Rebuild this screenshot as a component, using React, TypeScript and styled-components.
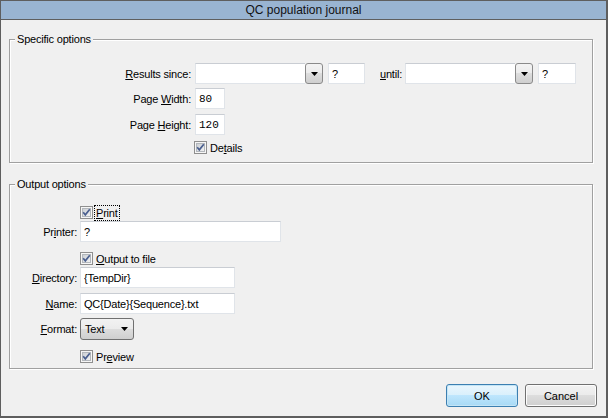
import React from 'react';
import styled, { createGlobalStyle } from 'styled-components';

const GlobalStyle = createGlobalStyle`
  html, body {
    margin: 0;
    padding: 0;
    background: #f0f0f0;
  }
  body {
    font-family: "Liberation Sans", Arial, sans-serif;
    font-size: 11px;
    color: #000;
  }
`;

const Window = styled.div`
  width: 608px;
  height: 418px;
  box-sizing: border-box;
  border-style: solid;
  border-color: #5e5e5e;
  border-width: 1px 2px 2px 1px;
  background: #f0f0f0;
  display: flex;
  flex-direction: column;
`;

const TitleBar = styled.div`
  height: 18px;
  flex: none;
  background: #99b4d1;
  border-bottom: 1px solid #5e5e5e;
  display: flex;
  align-items: center;
  justify-content: center;
  font-size: 12px;
  color: #111;
`;

const Body = styled.div`
  flex: 1;
  padding: 19px 9px 0 8px;
  display: flex;
  flex-direction: column;
`;

const Group = styled.section<{ $height: number; $mt?: number }>`
  position: relative;
  box-sizing: border-box;
  width: 584px;
  height: ${p => p.$height}px;
  margin-top: ${p => p.$mt ?? 0}px;
  border: 1px solid #a0a0a0;
  box-shadow: inset 1px 1px 0 #fff, 1px 1px 0 #fff;
  display: flex;
  flex-direction: column;
`;

const Legend = styled.span`
  position: absolute;
  top: -7px;
  left: 5px;
  padding: 0 2px;
  line-height: 13px;
  background: #f0f0f0;
  letter-spacing: -0.2px;
`;

const Row = styled.div<{ $mt: number; $h: number; $indent?: number }>`
  display: flex;
  align-items: center;
  height: ${p => p.$h}px;
  margin-top: ${p => p.$mt}px;
  padding-left: ${p => p.$indent ?? 0}px;
`;

const FieldLabel = styled.label<{ $w?: number; $gap?: number }>`
  flex: none;
  width: ${p => (p.$w ? `${p.$w}px` : 'auto')};
  margin-right: ${p => p.$gap ?? 4}px;
  text-align: right;
  white-space: nowrap;
  letter-spacing: -0.2px;
`;

const Key = styled.span`
  text-decoration: underline;
`;

const TextBox = styled.input<{ $w: number; $mono?: boolean }>`
  box-sizing: border-box;
  width: ${p => p.$w}px;
  height: 21px;
  margin: 0;
  padding: 0 0 0 3px;
  border: 1px solid #e0e4e9;
  border-top-color: #c9cdd3;
  background: #fff;
  outline: none;
  font-family: ${p => (p.$mono ? '"Liberation Mono", monospace' : '"Liberation Sans", Arial, sans-serif')};
  font-size: 11px;
  letter-spacing: ${p => (p.$mono ? '0' : '-0.2px')};
  color: #000;
`;

const Combo = styled.div<{ $ml?: number }>`
  display: flex;
  width: 128px;
  height: 21px;
  margin-left: ${p => p.$ml ?? 0}px;
  margin-right: 5px;
`;

const ComboField = styled.div`
  flex: 1;
  box-sizing: border-box;
  background: #fff;
  border: 1px solid #e0e4e9;
  border-top-color: #c9cdd3;
  border-right: none;
`;

const ComboButton = styled.div`
  width: 18px;
  box-sizing: border-box;
  border: 1px solid #8a8a8a;
  border-radius: 3px;
  background: linear-gradient(#f3f3f3, #ebebeb 50%, #dddddd 50%, #cfcfcf);
  display: flex;
  align-items: center;
  justify-content: center;
`;

const SelectBox = styled.div`
  box-sizing: border-box;
  width: 54px;
  height: 22px;
  border: 1px solid #707070;
  border-radius: 3px;
  background: linear-gradient(#f2f2f2, #ebebeb 50%, #dddddd 50%, #cfcfcf);
  display: flex;
  align-items: center;
  justify-content: space-between;
  padding: 0 5px 0 4px;
  letter-spacing: -0.2px;
`;

const CheckWrap = styled.div`
  display: flex;
  align-items: center;
  gap: 1px;
  letter-spacing: -0.2px;
`;

const CheckText = styled.span<{ $focus?: boolean }>`
  padding: 1px 1px;
  border: 1px dotted ${p => (p.$focus ? '#000' : 'transparent')};
`;

const Footer = styled.div`
  display: flex;
  justify-content: flex-end;
  gap: 7px;
  margin-top: 15px;
`;

const Button = styled.button<{ $default?: boolean }>`
  box-sizing: border-box;
  width: 72px;
  height: 23px;
  margin: 0;
  border-radius: 3px;
  border: 1px solid ${p => (p.$default ? '#3c7fb1' : '#707070')};
  background: ${p =>
    p.$default
      ? 'linear-gradient(#eaf6fd, #d9f0fc 50%, #bee6fd 50%, #a7d9f5)'
      : 'linear-gradient(#f2f2f2, #ebebeb 50%, #dddddd 50%, #cfcfcf)'};
  box-shadow: inset 0 0 0 1px ${p => (p.$default ? '#c4e5f6' : '#fcfcfc')};
  font-family: "Liberation Sans", Arial, sans-serif;
  font-size: 11px;
  color: #000;
`;

const Arrow = () => (
  <svg width="7" height="4" viewBox="0 0 7 4">
    <path d="M0 0h7L3.5 4z" fill="#000" />
  </svg>
);

const CheckBox = () => (
  <svg width="13" height="13" viewBox="0 0 13 13">
    <defs>
      <linearGradient id="cbFill" x1="0" y1="0" x2="1" y2="1">
        <stop offset="0" stopColor="#c9cdd2" />
        <stop offset="1" stopColor="#f4f4f4" />
      </linearGradient>
    </defs>
    <rect x="0.5" y="0.5" width="12" height="12" fill="#f6f6f6" stroke="#8f8f8f" />
    <rect x="2.5" y="2.5" width="8" height="8" fill="url(#cbFill)" stroke="#b3b7bc" />
    <path d="M3.2 6.3 L5.3 8.8 L9.8 3.2" fill="none" stroke="#4a5f8f" strokeWidth="1.7" />
  </svg>
);

const Check = ({ children, focus }: { children: React.ReactNode; focus?: boolean }) => (
  <CheckWrap>
    <CheckBox />
    <CheckText $focus={focus}>{children}</CheckText>
  </CheckWrap>
);

const App: React.FC = () => {
  return (
    <>
      <GlobalStyle />
      <Window>
        <TitleBar>QC population journal</TitleBar>
        <Body>
          <Group $height={124}>
            <Legend>Specific options</Legend>
            <Row $mt={23} $h={21}>
              <FieldLabel $w={181}>
                <Key>R</Key>esults since:
              </FieldLabel>
              <Combo>
                <ComboField />
                <ComboButton>
                  <Arrow />
                </ComboButton>
              </Combo>
              <TextBox $w={37} defaultValue="?" readOnly />
              <FieldLabel $gap={3} style={{ marginLeft: 15 }}>
                <Key>u</Key>ntil:
              </FieldLabel>
              <Combo>
                <ComboField />
                <ComboButton>
                  <Arrow />
                </ComboButton>
              </Combo>
              <TextBox $w={38} defaultValue="?" readOnly />
            </Row>
            <Row $mt={4} $h={21}>
              <FieldLabel $w={181}>
                Page <Key>W</Key>idth:
              </FieldLabel>
              <TextBox $w={30} $mono defaultValue="80" readOnly />
            </Row>
            <Row $mt={5} $h={21}>
              <FieldLabel $w={181}>
                Page <Key>H</Key>eight:
              </FieldLabel>
              <TextBox $w={30} $mono defaultValue="120" readOnly />
            </Row>
            <Row $mt={6} $h={13} $indent={184}>
              <Check>
                De<Key>t</Key>ails
              </Check>
            </Row>
          </Group>

          <Group $height={185} $mt={21}>
            <Legend>Output options</Legend>
            <Row $mt={21} $h={13} $indent={70}>
              <Check focus>
                <Key>P</Key>rint
              </Check>
            </Row>
            <Row $mt={2} $h={21}>
              <FieldLabel $w={67} $gap={3}>
                Pr<Key>i</Key>nter:
              </FieldLabel>
              <TextBox $w={201} defaultValue="?" readOnly />
            </Row>
            <Row $mt={10} $h={13} $indent={70}>
              <Check>
                <Key>O</Key>utput to file
              </Check>
            </Row>
            <Row $mt={2} $h={21}>
              <FieldLabel $w={67} $gap={3}>
                <Key>D</Key>irectory:
              </FieldLabel>
              <TextBox $w={155} defaultValue="{TempDir}" readOnly />
            </Row>
            <Row $mt={5} $h={21}>
              <FieldLabel $w={67} $gap={3}>
                <Key>N</Key>ame:
              </FieldLabel>
              <TextBox $w={155} defaultValue="QC{Date}{Sequence}.txt" readOnly />
            </Row>
            <Row $mt={4} $h={22}>
              <FieldLabel $w={67} $gap={3}>
                <Key>F</Key>ormat:
              </FieldLabel>
              <SelectBox>
                Text
                <Arrow />
              </SelectBox>
            </Row>
            <Row $mt={10} $h={13} $indent={70}>
              <Check>
                Pr<Key>e</Key>view
              </Check>
            </Row>
          </Group>

          <Footer>
            <Button $default>OK</Button>
            <Button>Cancel</Button>
          </Footer>
        </Body>
      </Window>
    </>
  );
};

export default App;
